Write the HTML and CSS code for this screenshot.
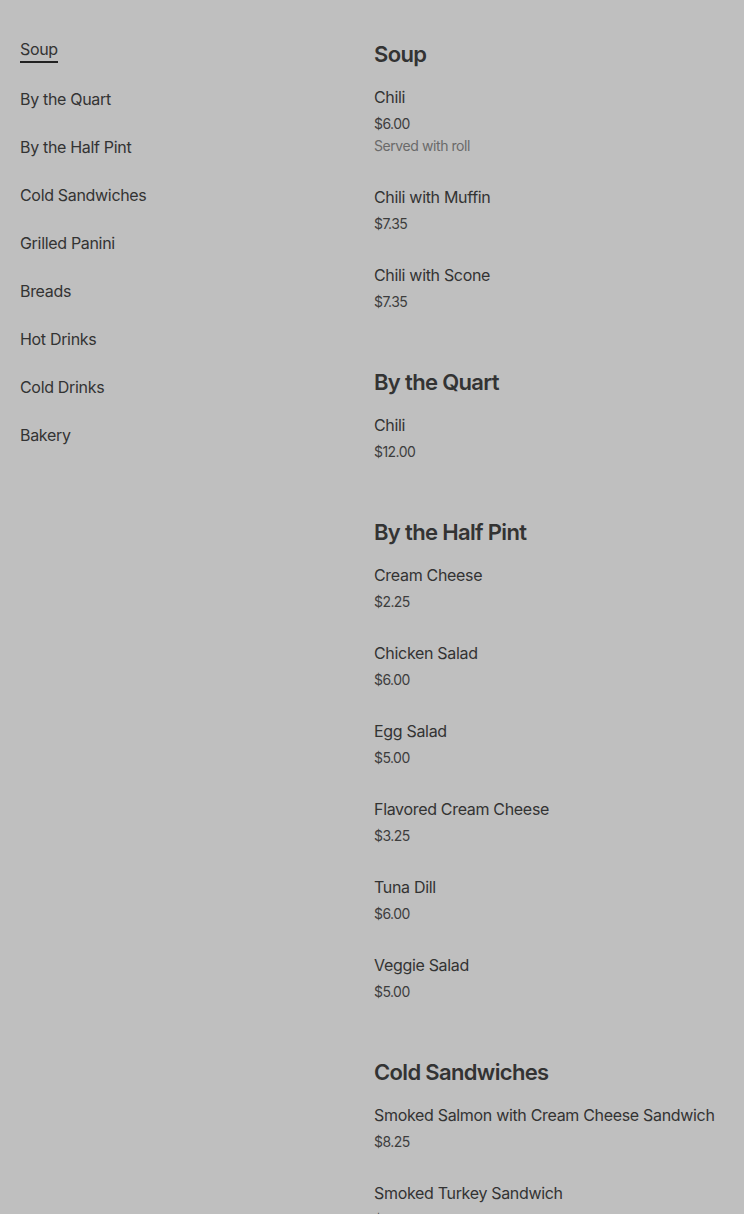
FILE: index.html
```html
<!DOCTYPE html>
<html lang="en">
<head>
<meta charset="utf-8">
<title>Menu</title>
<link rel="stylesheet" href="styles.css">
</head>
<body>
<div class="page">
  <nav class="nav">
    <a class="nav-link active" href="#soup">Soup</a>
    <a class="nav-link" href="#quart">By the Quart</a>
    <a class="nav-link" href="#halfpint">By the Half Pint</a>
    <a class="nav-link" href="#cold">Cold Sandwiches</a>
    <a class="nav-link" href="#panini">Grilled Panini</a>
    <a class="nav-link" href="#breads">Breads</a>
    <a class="nav-link" href="#hot">Hot Drinks</a>
    <a class="nav-link" href="#colddrinks">Cold Drinks</a>
    <a class="nav-link" href="#bakery">Bakery</a>
  </nav>
  <main class="menu">
    <section class="section" id="soup">
      <h2 class="section-title">Soup</h2>
      <div class="item"><div class="item-name">Chili</div><div class="item-price">$6.00</div><div class="item-desc">Served with roll</div></div>
      <div class="item"><div class="item-name">Chili with Muffin</div><div class="item-price">$7.35</div></div>
      <div class="item"><div class="item-name">Chili with Scone</div><div class="item-price">$7.35</div></div>
    </section>
    <section class="section" id="quart">
      <h2 class="section-title">By the Quart</h2>
      <div class="item"><div class="item-name">Chili</div><div class="item-price">$12.00</div></div>
    </section>
    <section class="section" id="halfpint">
      <h2 class="section-title">By the Half Pint</h2>
      <div class="item"><div class="item-name">Cream Cheese</div><div class="item-price">$2.25</div></div>
      <div class="item"><div class="item-name">Chicken Salad</div><div class="item-price">$6.00</div></div>
      <div class="item"><div class="item-name">Egg Salad</div><div class="item-price">$5.00</div></div>
      <div class="item"><div class="item-name">Flavored Cream Cheese</div><div class="item-price">$3.25</div></div>
      <div class="item"><div class="item-name">Tuna Dill</div><div class="item-price">$6.00</div></div>
      <div class="item"><div class="item-name">Veggie Salad</div><div class="item-price">$5.00</div></div>
    </section>
    <section class="section" id="cold">
      <h2 class="section-title">Cold Sandwiches</h2>
      <div class="item"><div class="item-name">Smoked Salmon with Cream Cheese Sandwich</div><div class="item-price">$8.25</div></div>
      <div class="item"><div class="item-name">Smoked Turkey Sandwich</div><div class="item-price">$8.25</div></div>
    </section>
  </main>
</div>
</body>
</html>
```
FILE: styles.css
```css
html, body {
  margin: 0;
  padding: 0;
  background: #bfbfbf;
}
body {
  font-family: Inter, "Liberation Sans", sans-serif;
  color: #333333;
  height: 1214px;
  overflow: hidden;
}
.page {
  display: grid;
  grid-template-columns: 354px 1fr;
  padding: 37px 20px 0 20px;
}
.nav {
  display: flex;
  flex-direction: column;
  align-items: flex-start;
  gap: 24px;
}
.nav-link {
  font-size: 16px;
  line-height: 24px;
  color: #333333;
  text-decoration: none;
  letter-spacing: -0.02em;
}
.nav-link.active {
  border-bottom: 2px solid #222222;
}
.menu {
  display: flex;
  flex-direction: column;
  gap: 25px;
}
.section-title {
  margin: 2px 0 15px 0;
  font-size: 22px;
  line-height: 30px;
  font-weight: 600;
  letter-spacing: -0.03em;
  color: #333333;
}
.item {
  margin-bottom: 25px;
}
.item-name {
  font-size: 16px;
  line-height: 26px;
  letter-spacing: -0.02em;
  color: #333333;
}
.item-price {
  font-size: 14px;
  line-height: 26px;
  padding-top: 1px;
  color: #3d3d3d;
  letter-spacing: -0.04em;
}
.item-desc {
  font-size: 14px;
  line-height: 18px;
  padding-bottom: 4px;
  color: #6a6a6a;
  letter-spacing: -0.03em;
}
```
